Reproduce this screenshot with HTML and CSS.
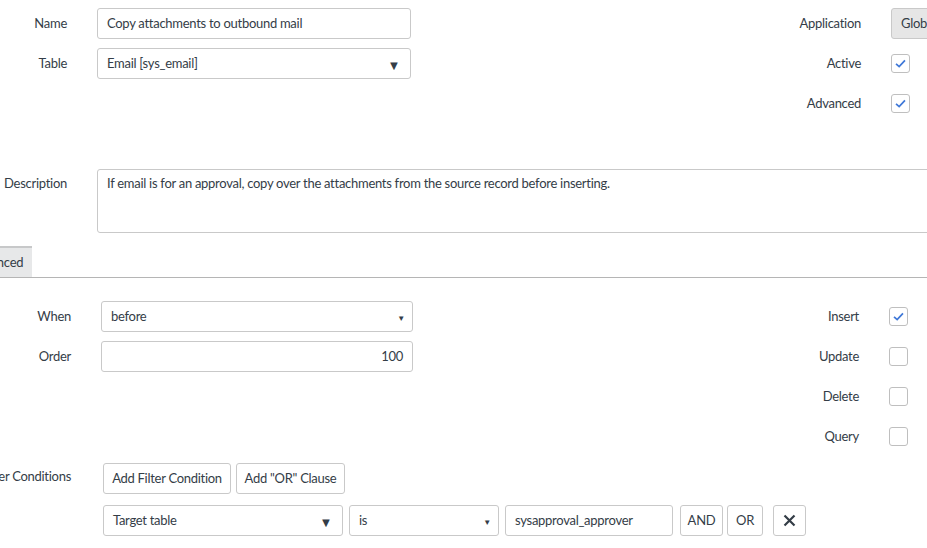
FILE: index.html
```html
<!DOCTYPE html>
<html lang="en">
<head>
    <meta charset="UTF-8">
    <title>Business Rule</title>
    <link rel="stylesheet" href="styles.css">
</head>
<body>
    <div class="section top">
        <div class="col-left">
            <div class="row">
                <div class="label">Name</div>
                <div class="field input">Copy attachments to outbound mail</div>
            </div>
            <div class="row">
                <div class="label">Table</div>
                <div class="field select">Email [sys_email]<span class="arrow big">&#9660;</span></div>
            </div>
        </div>
        <div class="col-right">
            <div class="row">
                <div class="label">Application</div>
                <div class="app-btn">Global</div>
            </div>
            <div class="row">
                <div class="label">Active</div>
                <div class="checkbox checked"><svg viewBox="0 0 19 19"><polyline points="4.5,9.8 8,13 14.5,6"/></svg></div>
            </div>
            <div class="row">
                <div class="label">Advanced</div>
                <div class="checkbox checked"><svg viewBox="0 0 19 19"><polyline points="4.5,9.8 8,13 14.5,6"/></svg></div>
            </div>
        </div>
    </div>

    <div class="section desc">
        <div class="label">Description</div>
        <div class="textarea">If email is for an approval, copy over the attachments from the source record before inserting.</div>
    </div>

    <div class="tabs">
        <div class="tab">Advanced</div>
    </div>

    <div class="section bottom">
        <div class="col-left">
            <div class="row">
                <div class="label">When</div>
                <div class="field select">before<span class="arrow small">&#9660;</span></div>
            </div>
            <div class="row">
                <div class="label">Order</div>
                <div class="field input num">100</div>
            </div>
        </div>
        <div class="col-right">
            <div class="row">
                <div class="label">Insert</div>
                <div class="checkbox checked"><svg viewBox="0 0 19 19"><polyline points="4.5,9.8 8,13 14.5,6"/></svg></div>
            </div>
            <div class="row">
                <div class="label">Update</div>
                <div class="checkbox"></div>
            </div>
            <div class="row">
                <div class="label">Delete</div>
                <div class="checkbox"></div>
            </div>
            <div class="row">
                <div class="label">Query</div>
                <div class="checkbox"></div>
            </div>
        </div>
    </div>

    <div class="section filter">
        <div class="label">Filter Conditions</div>
        <div class="filter-body">
            <div class="btn-row">
                <div class="btn add-cond">Add Filter Condition</div>
                <div class="btn add-or">Add "OR" Clause</div>
            </div>
            <div class="cond-row">
                <div class="field select cond-field">Target table<span class="arrow big">&#9660;</span></div>
                <div class="field select cond-op">is<span class="arrow small">&#9660;</span></div>
                <div class="field input cond-value">sysapproval_approver</div>
                <div class="btn and">AND</div>
                <div class="btn or">OR</div>
                <div class="btn remove"><svg viewBox="0 0 31 29"><path d="M10.5 9.5 L20.5 19.5 M20.5 9.5 L10.5 19.5"/></svg></div>
            </div>
        </div>
    </div>
</body>
</html>
```

FILE: styles.css
```css
body {
    margin: 0;
    width: 927px;
    height: 548px;
    overflow: hidden;
    background: #fff;
    color: #343d47;
    font-family: Lato, "Liberation Sans", sans-serif;
    font-size: 13px;
    letter-spacing: -0.28px;
}

.section {
    display: flex;
}

.row {
    display: flex;
    align-items: center;
    height: 31px;
    margin-bottom: 9px;
}

/* labels overflow to the left when the column is too narrow */
.label {
    display: flex;
    justify-content: flex-end;
    white-space: nowrap;
    flex: none;
    padding-bottom: 2px;
}

.field {
    box-sizing: border-box;
    height: 31px;
    border: 1px solid #c9c9c9;
    border-radius: 3px;
    padding: 0 9px 2px;
    display: flex;
    align-items: center;
    position: relative;
    background: #fff;
    flex: none;
}

.select .arrow {
    position: absolute;
    color: #343d47;
}

.arrow.big {
    right: 10px;
    font-size: 13px;
    top: 8px;
}

.arrow.small {
    right: 7px;
    font-size: 8px;
    top: 11px;
}

.num {
    justify-content: flex-end;
}

/* right-hand column: labels end 30px before their control */
.col-right {
    margin-left: auto;
    flex: none;
}

.col-right .label {
    width: 120px;
    margin-right: 30px;
}

/* top block */
.top {
    padding-top: 8px;
}

.top .col-left .label {
    width: 67px;
    margin-right: 30px;
}

.top .field {
    width: 314px;
}

.top .col-right {
    width: 186px;
}

.app-btn {
    box-sizing: border-box;
    height: 31px;
    width: 70px;
    flex: none;
    padding: 0 9px 2px;
    display: flex;
    align-items: center;
    background: #e6e6e6;
    border: 1px solid #c9c9c9;
    border-radius: 3px;
}

.checkbox {
    box-sizing: border-box;
    width: 19px;
    height: 19px;
    flex: none;
    border: 1px solid #bfbfbf;
    border-radius: 3px;
    background: #fff;
}

.checkbox svg {
    display: block;
    width: 17px;
    height: 17px;
}

.checkbox polyline {
    fill: none;
    stroke: #3f78d8;
    stroke-width: 1.9;
}

/* description */
.desc {
    margin-top: 41px;
}

.desc .label {
    width: 67px;
    margin-right: 30px;
    padding-top: 6px;
}

.textarea {
    box-sizing: border-box;
    height: 64px;
    flex: 1;
    margin-right: -10px;
    border: 1px solid #c9c9c9;
    border-radius: 3px;
    padding: 5px 9px;
}

/* tabs */
.tabs {
    margin-top: 13px;
    border-bottom: 1px solid #b5b5b5;
    display: flex;
}

.tab {
    margin-left: -40px;
    height: 31px;
    padding: 0 9px 2px;
    box-sizing: border-box;
    display: flex;
    align-items: center;
    background: #e7e8e9;
    border-top: 2px solid #c7c8c9;
}

/* when / actions block */
.bottom {
    margin-top: 23px;
}

.bottom .col-left .label {
    width: 71px;
    margin-right: 30px;
}

.bottom .field {
    width: 312px;
}

.bottom .col-right {
    width: 188px;
}

/* filter conditions */
.filter {
    margin-top: 2px;
}

.filter .label {
    box-sizing: border-box;
    width: 71px;
    margin-right: 32px;
    height: 31px;
    align-items: center;
    padding-bottom: 5px;
}

.btn-row,
.cond-row {
    display: flex;
}

.cond-row {
    margin-top: 11px;
}

.btn {
    box-sizing: border-box;
    height: 31px;
    padding: 0 0 2px;
    display: flex;
    align-items: center;
    justify-content: center;
    border: 1px solid #c9c9c9;
    border-radius: 3px;
    background: #fff;
    flex: none;
}

.add-cond {
    width: 128px;
}

.add-or {
    width: 109px;
    margin-left: 5px;
}

.cond-field {
    width: 240px;
}

.cond-op {
    width: 150px;
    margin-left: 6px;
}

.cond-value {
    width: 168px;
    margin-left: 6px;
}

.btn.and {
    width: 43px;
    margin-left: 7px;
}

.btn.or {
    width: 36px;
    margin-left: 4px;
}

.btn.remove {
    width: 33px;
    margin-left: 10px;
    padding: 0;
}

.remove svg {
    width: 31px;
    height: 29px;
}

.remove path {
    stroke: #343d47;
    stroke-width: 2.2;
}
```
